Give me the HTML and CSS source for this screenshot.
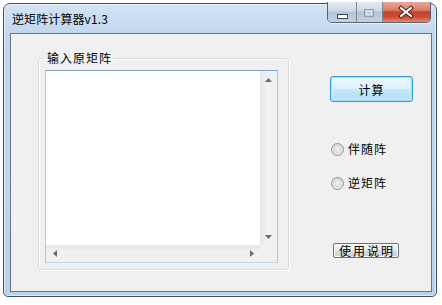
FILE: index.html
```html
<!DOCTYPE html>
<html lang="zh-CN">
<head>
  <meta charset="UTF-8">
  <title>逆矩阵计算器v1.3</title>
  <link rel="stylesheet" href="styles.css">
</head>
<body>
  <div class="window">
    <div class="titlebar">
      <span class="title">逆矩阵计算器v1.3</span>
      <div class="caption-buttons">
        <span class="cap-btn cap-min">
          <svg width="28" height="20" viewBox="0 0 28 20"><rect x="9.5" y="12.5" width="10" height="4" fill="#fff" stroke="#3b4756"/></svg>
        </span>
        <span class="cap-btn cap-max">
          <svg width="25" height="20" viewBox="0 0 25 20"><rect x="7.5" y="7.5" width="9" height="7" fill="none" stroke="#8c9bb0"/><rect x="9.5" y="9.5" width="5" height="3" fill="none" stroke="#e4ebf3"/></svg>
        </span>
        <span class="cap-btn cap-close">
          <svg width="47" height="20" viewBox="0 0 47 20"><path d="M18 6 L28 14 M28 6 L18 14" stroke="#4a1d16" stroke-width="4" stroke-linecap="square"/><path d="M18 6 L28 14 M28 6 L18 14" stroke="#fff" stroke-width="2" stroke-linecap="square"/></svg>
        </span>
      </div>
    </div>

    <div class="client">
      <fieldset class="group">
        <legend>输入原矩阵</legend>
        <div class="matrix-box">
          <textarea class="matrix-input"></textarea>
          <div class="vscroll">
            <svg width="7" height="4" viewBox="0 0 7 4"><path d="M3.5 0 L7 4 L0 4 Z" fill="#6d6d6d"/></svg>
            <svg width="7" height="4" viewBox="0 0 7 4"><path d="M0 0 L7 0 L3.5 4 Z" fill="#6d6d6d"/></svg>
          </div>
          <div class="hscroll">
            <svg width="4" height="7" viewBox="0 0 4 7"><path d="M4 0 L4 7 L0 3.5 Z" fill="#6d6d6d"/></svg>
            <svg width="4" height="7" viewBox="0 0 4 7"><path d="M0 0 L4 3.5 L0 7 Z" fill="#6d6d6d"/></svg>
          </div>
          <div class="corner"></div>
        </div>
      </fieldset>

      <div class="side">
        <button class="btn-calc">计算</button>
        <label class="radio"><span class="radio-dot"></span>伴随阵</label>
        <label class="radio radio-second"><span class="radio-dot"></span>逆矩阵</label>
        <button class="btn-help">使用说明</button>
      </div>
    </div>
  </div>
</body>
</html>
```

FILE: styles.css
```css
body {
  margin: 0;
  background: #fff;
  font-family: "Noto Sans CJK SC", "Noto Sans", sans-serif;
  font-size: 12px;
  color: #000;
}
.window {
  margin: 3px 0 0 3px;
  width: 434px;
  height: 294px;
  box-sizing: border-box;
  border: 1px solid #44505e;
  border-radius: 7px 7px 5px 5px;
  background: linear-gradient(to bottom, #d3e3f4 0, #c2d7ee 30px, #bad2eb 100%);
  box-shadow: inset 0 0 0 1px rgba(255, 255, 255, 0.55);
  padding: 0 4px 4px 6px;
  display: flex;
  flex-direction: column;
}
.titlebar {
  height: 29px;
  display: flex;
  align-items: center;
  justify-content: space-between;
}
.title {
  margin-left: 2px;
  font-size: 12px;
  line-height: 14px;
  letter-spacing: 0.1px;
}
.caption-buttons {
  align-self: flex-start;
  margin-top: -2px;
  margin-right: 1px;
  display: flex;
  border: 1px solid #59626e;
  border-top: 0;
  border-radius: 0 0 5px 5px;
  overflow: hidden;
  box-shadow: 0 1px 0 rgba(255, 255, 255, 0.6);
}
.cap-btn {
  display: block;
  height: 20px;
}
.cap-btn svg {
  display: block;
}
.cap-min,
.cap-max {
  background: linear-gradient(to bottom, #e3eaf3 0, #cdd8e5 45%, #b4c3d5 50%, #c3d2e3 100%);
  border-right: 1px solid #7d8796;
}
.cap-close {
  background: linear-gradient(to bottom, #e9aa9c 0, #d98068 40%, #c5432d 50%, #cc4d35 75%, #e28a6e 100%);
}
.client {
  flex: 1;
  border: 1px solid #6a7483;
  background: #f0f0f0;
  display: flex;
  align-items: flex-start;
}
.group {
  margin: 17px 0 0 27px;
  width: 251px;
  box-sizing: border-box;
  padding: 5px 10px 6px 6px;
  border: 1px solid #d5dfe5;
  border-radius: 3px;
  box-shadow: inset 1px 1px 0 #fff, 1px 1px 0 #fff;
}
.group legend {
  padding: 0 2px;
  font-size: 12px;
  line-height: 14px;
  letter-spacing: 1px;
}
.matrix-box {
  width: 233px;
  height: 193px;
  box-sizing: border-box;
  border: 1px solid #a9c9e6;
  border-top-color: #7aa6d0;
  border-bottom-color: #b7d5ec;
  display: grid;
  grid-template-columns: 1fr 17px;
  grid-template-rows: 1fr 17px;
  background: #fff;
}
.matrix-input {
  border: 0;
  margin: 0;
  padding: 0;
  resize: none;
  outline: none;
  overflow: hidden;
  background: #fff;
}
.vscroll {
  background: linear-gradient(to right, #e6e6e6, #f1f1f1 40%, #f1f1f1);
  display: flex;
  flex-direction: column;
  justify-content: space-between;
  align-items: center;
  padding: 7px 0 6px;
}
.hscroll {
  background: linear-gradient(to bottom, #e6e6e6, #f1f1f1 40%, #f1f1f1);
  display: flex;
  justify-content: space-between;
  align-items: center;
  padding: 0 6px 0 7px;
}
.vscroll svg,
.hscroll svg {
  display: block;
}
.corner {
  background: #f0f0f0;
}
.side {
  margin: 42px 0 0 41px;
  display: flex;
  flex-direction: column;
  align-items: flex-start;
}
.btn-calc {
  width: 83px;
  height: 26px;
  margin: 0;
  padding: 0;
  font-family: inherit;
  font-size: 12px;
  letter-spacing: 1px;
  color: #000;
  border: 1px solid #3c9ad4;
  border-radius: 3px;
  background: linear-gradient(to bottom, #eef8fd 0, #dcf1fc 48%, #c4e7fb 52%, #b2def6 100%);
  box-shadow: inset 0 0 0 1px #9fe3fb, inset 0 0 3px 1px #c8f0fd;
}
.radio {
  display: flex;
  align-items: center;
  margin: 40px 0 0 1px;
  gap: 4px;
  line-height: 14px;
  letter-spacing: 1px;
}
.radio-second {
  margin-top: 20px;
}
.radio-dot {
  width: 13px;
  height: 13px;
  box-sizing: border-box;
  border-radius: 50%;
  border: 1px solid #8e8f8f;
  background: radial-gradient(circle at 50% 45%, #f4f4f4 0, #d6d6d6 55%, #ececec 60%, #fafafa 100%);
}
.btn-help {
  width: 66px;
  height: 15px;
  margin: 53px 0 0 3px;
  padding: 0;
  font-family: inherit;
  font-size: 12px;
  line-height: 13px;
  letter-spacing: 2px;
  text-indent: 2px;
  color: #000;
  border: 1px solid #707070;
  border-radius: 2px;
  background: linear-gradient(to bottom, #f2f2f2 0, #ebebeb 48%, #dddddd 52%, #cfcfcf 100%);
  box-shadow: inset 0 0 0 1px #fcfcfc;
}
```
